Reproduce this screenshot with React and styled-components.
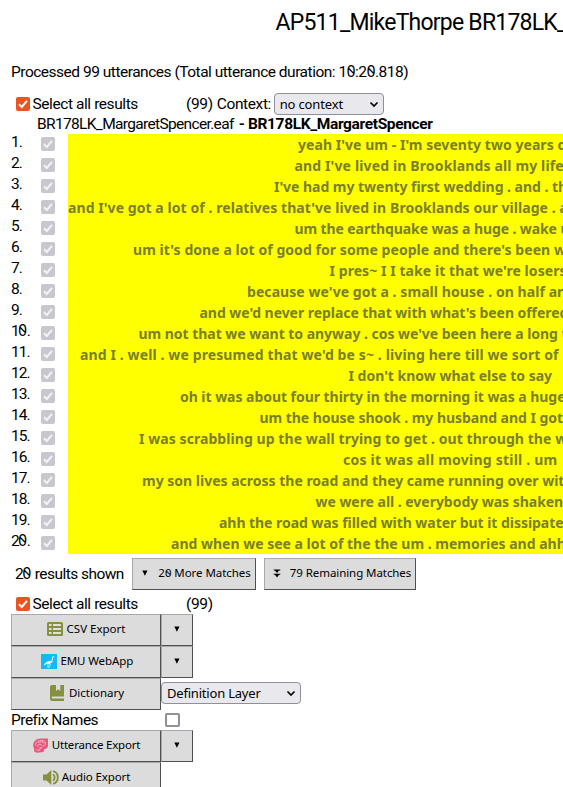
import React from 'react';
import styled, { createGlobalStyle } from 'styled-components';

const Global = createGlobalStyle`
  * { box-sizing: border-box; }
  html, body { margin: 0; background: #fff; overflow: hidden; }
`;

const Page = styled.main`
  width: 563px;
  height: 787px;
  overflow: hidden;
  padding-left: 11px;
  color: #000;
  font: 15.5px/20px Roboto, "Liberation Sans", sans-serif;
  letter-spacing: -0.46px;
  white-space: nowrap;
`;
const Title = styled.h1`
  margin: 8px 0 0 264.5px;
  height: 54px;
  font-size: 23px;
  font-weight: 400;
  line-height: 29px;
  letter-spacing: -0.78px;
`;
const Summary = styled.p`
  margin: 0;
  height: 32px;
  letter-spacing: -0.49px;
`;
const Line = styled.div`
  display: flex;
  align-items: center;
  height: ${(p) => p.$height}px;
`;
const Label = styled.span`
  width: ${(p) => (p.$width ? `${p.$width}px` : 'auto')};
  margin-left: ${(p) => p.$indent || 0}px;
  letter-spacing: ${(p) => p.$track ?? -0.46}px;
`;
const Strong = styled.b`
  letter-spacing: -0.35px;
`;
const ZeroGlyph = styled.span`
  display: inline-block;
  font-family: "Noto Sans", sans-serif;
  font-feature-settings: "zero";
  line-height: 1;
  transform: scaleX(-1);
`;
const Box = styled.span`
  flex: none;
  display: inline-flex;
  width: ${(p) => (p.$tone === 'empty' ? 15 : 14)}px;
  height: 14px;
  border-radius: 2px;
  background: ${(p) => (p.$tone === 'accent' ? '#e95420' : p.$tone === 'muted' ? '#c7c7cf' : '#fff')};
  border: ${(p) => (p.$tone === 'empty' ? '2px solid #8f8f9d' : '0')};
  margin: ${(p) => p.$margin || '0'};
`;
const Select = styled.span`
  display: inline-flex;
  align-items: center;
  justify-content: space-between;
  width: ${(p) => p.$width}px;
  height: 22px;
  margin: 0 0 ${(p) => p.$lift || 0}px ${(p) => p.$gap || 0}px;
  padding: 0 4px 0 5px;
  border: 1px solid #8f8f9d;
  border-radius: 4px;
  background: #e9e9ed;
  font: 13px/20px "Noto Sans", sans-serif;
  letter-spacing: ${(p) => p.$track}px;
`;
const Results = styled.ol`
  list-style: none;
  margin: 0;
  padding: 0;
`;
const Result = styled.li`
  display: grid;
  grid-template-columns: 30px 27px 1fr;
  height: 21px;
`;
const Index = styled.span`
  line-height: 17px;
  letter-spacing: -0.9px;
`;
const Match = styled.span`
  overflow: hidden;
  padding-left: ${(p) => p.$start - 68}px;
  background: #ff0;
  color: #7a802b;
  font: 700 14px/21px "Noto Sans", sans-serif;
  letter-spacing: ${(p) => p.$track}px;
`;
const Button = styled.button`
  display: inline-flex;
  align-items: center;
  justify-content: center;
  gap: ${(p) => p.$gap ?? 4}px;
  width: ${(p) => p.$width}px;
  height: 32px;
  margin: 0 ${(p) => p.$after || 0}px 0 0;
  padding: 0 0 2px ${(p) => p.$push || 0}px;
  border: 1px solid;
  border-color: #a9a9a9 #505050 #505050 #a9a9a9;
  background: #dcdcdc;
  color: #000;
  font: 11.5px/16px "Noto Sans", sans-serif;
  letter-spacing: ${(p) => p.$track || 0}px;
`;
const Icon = styled.svg`
  flex: none;
  display: block;
`;

const Text0 = ({ children }) =>
  children.split(/(0)/).map((part, i) => (part === '0' ? <ZeroGlyph key={i}>0</ZeroGlyph> : part));

const Check = ({ tone, margin }) => (
  <Box $tone={tone} $margin={margin}>
    {tone !== 'empty' && (
      <Icon width="14" height="14" viewBox="0 0 14 14">
        <path d="M3 7.3 5.8 10 11 3.8" fill="none" stroke={tone === 'muted' ? '#f3f3f6' : '#fff'} strokeWidth="2" />
      </Icon>
    )}
  </Box>
);
const Chevron = () => (
  <Icon width="10" height="7" viewBox="0 0 10 7">
    <path d="M1.5 1.5 5 5l3.5-3.5" fill="none" stroke="#000" strokeWidth="1.7" />
  </Icon>
);
const Down = () => (
  <Icon width="6" height="6" viewBox="0 0 6 6">
    <path d="M.3.6h5.2L2.9 5.8z" />
  </Icon>
);
const DoubleDown = () => (
  <Icon width="8" height="9" viewBox="0 0 8 9">
    <path d="M.7.5h6.6v1H6L4 4 2 1.5H.7zM.7 4.8h6.6v1H6L4 8.5 2 5.8H.7z" />
  </Icon>
);
const TableIcon = () => (
  <Icon width="16" height="14" viewBox="0 0 16 14">
    <rect width="16" height="14" rx="1.5" fill="#86913f" />
    <path d="M2 2h2.5v2H2zM6 2h8v2H6zM2 6h2.5v2H2zM6 6h8v2H6zM2 10h2.5v2H2zM6 10h8v2H6z" fill="#e0e0dc" />
  </Icon>
);
const EmuIcon = () => (
  <Icon width="16" height="15" viewBox="0 0 16 15">
    <path d="M0 0h16v15H0z" fill="#12baf8" />
    <path d="M2.8 11.6C3.8 8.3 6.4 6.8 9.6 7c1.2-.3 1.4-1.6 1.5-3.6l1.2-1.3 1.2.6-1.3.7-.5 3.2c-.2 1.6-1.3 2.7-3 3.1L5.6 10z" fill="#f4fcff" />
    <path d="m7.2 9.5-.4 3.8h1.8M8.4 9.3l1 1.5-1.2 2" fill="none" stroke="#fff" strokeWidth=".7" />
  </Icon>
);
const BookIcon = () => (
  <Icon width="14" height="16" viewBox="0 0 14 16">
    <path d="M2 0h4v6l2.2-1.7L10.3 6V0H14v11.4H2.6c-1.2 0-1.2 2 0 2H14V16H2c-1.2 0-2-.8-2-2V2c0-1.2.8-2 2-2z" fill="#86913f" />
  </Icon>
);
const BrainIcon = () => (
  <Icon width="15" height="15" viewBox="0 0 15 15">
    <path d="M15 .5v7c0 2.3-1.2 3.2-3.6 3.6L10.4 14 4 14.8l-2.8-1.3L1 10.5.2 8.2C-.4 3.5 3.4.2 8 .4z" fill="#e9587c" />
    <path d="M2.5 7.4C2.3 4 6 2 9 2.4c4 .4 4.7 4.6 1.7 5.4C8.8 8.2 8 6 6.2 6.3 4.8 6.5 4.2 8 5.4 8.9M5 4.6c2-1.4 5.8-.9 6 .8M3 11c1 1.3 2.6 2 4 .8V9.5l2.2.4" fill="none" stroke="#ffc2ce" strokeWidth=".8" />
  </Icon>
);
const SpeakerIcon = () => (
  <Icon width="16" height="15" viewBox="0 0 16 15">
    <path d="M0 4.5h3.5L8.3 0v15l-4.8-4.5H0z" fill="#86913f" />
    <path d="M10 4.2c2.2 1.3 2.2 5.3 0 6.6M10 1.2c6.4 1.5 6.4 11.1 0 12.6" fill="none" stroke="#86913f" strokeWidth="1.9" />
  </Icon>
);

const results = [
  [298, 0.05, "yeah I've um - I'm seventy two years old"],
  [294.5, 0.14, "and I've lived in Brooklands all my life"],
  [274, -0.03, "I've had my twenty first wedding . and . the"],
  [68, 0.07, "and I've got a lot of . relatives that've lived in Brooklands our village . and"],
  [294.5, -0.1, 'um the earthquake was a huge . wake up'],
  [133, 0.06, "um it's done a lot of good for some people and there's been w"],
  [329.5, 0.07, "I pres~ I I take it that we're losers"],
  [247, 0.07, "because we've got a . small house . on half an"],
  [199.5, -0.05, "and we'd never replace that with what's been offered"],
  [138.5, -0.03, "um not that we want to anyway . cos we've been here a long time"],
  [80, 0.12, "and I . well . we presumed that we'd be s~ . living here till we sort of"],
  [348.5, 0, "I don't know what else to say"],
  [180, -0.04, 'oh it was about four thirty in the morning it was a huge'],
  [259.5, -0.04, 'um the house shook . my husband and I got'],
  [139, 0.07, 'I was scrabbling up the wall trying to get . out through the w'],
  [343, 0.22, 'cos it was all moving still . um'],
  [142, 0, 'my son lives across the road and they came running over with'],
  [315.5, -0.03, 'we were all . everybody was shaken'],
  [219, -0.05, 'ahh the road was filled with water but it dissipated'],
  [171, 0, 'and when we see a lot of the the um . memories and ahh'],
];

const SelectAll = ({ height, children }) => (
  <Line $height={height}>
    <Check tone="accent" margin="0 3px 0 4.5px" />
    <Label $width={153.5} $track={-0.42}>Select all results</Label>
    <Label $track={-0.35}>(99)</Label>
    {children}
  </Line>
);

export default function App() {
  return (
    <Page>
      <Global />
      <Title>AP511_MikeThorpe BR178LK_MargaretSpencer</Title>
      <Summary><Text0>Processed 99 utterances (Total utterance duration: 10:20.818)</Text0></Summary>
      <SelectAll height={20}>
        <Label $indent={4} $track={-0.38}>Context:</Label>
        <Select $width={110} $gap={2.7} $track={-0.15}>no context<Chevron /></Select>
      </SelectAll>
      <Line $height={20}>
        <Label $indent={26} $track={-0.66}>BR178LK_MargaretSpencer.eaf</Label>
        <Label $indent={5}><Strong>- BR178LK_MargaretSpencer</Strong></Label>
      </Line>
      <Results>
        {results.map(([start, track, text], i) => (
          <Result key={text}>
            <Index><Text0>{`${i + 1}.`}</Text0></Index>
            <Check tone="muted" margin="3px 0 0" />
            <Match $start={start} $track={track}>{text}</Match>
          </Result>
        ))}
      </Results>
      <Line $height={40}>
        <Label $width={117} $indent={4} $track={-0.55}><Text0>20 results shown</Text0></Label>
        <Button $width={124} $gap={10} $after={8} $push={5} $track={-0.05}><Down /><span><Text0>20 More Matches</Text0></span></Button>
        <Button $width={152} $gap={9} $push={4} $track={-0.07}><DoubleDown />79 Remaining Matches</Button>
      </Line>
      <SelectAll height={20} />
      <Line $height={32}>
        <Button $width={150}><TableIcon />CSV Export</Button>
        <Button $width={32}><Down /></Button>
      </Line>
      <Line $height={32}>
        <Button $width={150} $gap={3.5} $push={2} $track={-0.1}><EmuIcon />EMU WebApp</Button>
        <Button $width={32}><Down /></Button>
      </Line>
      <Line $height={32}>
        <Button $width={150} $gap={5} $push={2}><BookIcon />Dictionary</Button>
        <Select $width={140} $lift={2} $track={-0.2}>Definition Layer<Chevron /></Select>
      </Line>
      <Line $height={20}>
        <Label $width={154} $track={-0.5}>Prefix Names</Label>
        <Check tone="empty" />
      </Line>
      <Line $height={32}>
        <Button $width={150} $push={1} $track={-0.2}><BrainIcon />Utterance Export</Button>
        <Button $width={32}><Down /></Button>
      </Line>
      <Line $height={32}>
        <Button $width={150} $gap={3} $push={1} $track={-0.1}><SpeakerIcon />Audio Export</Button>
      </Line>
    </Page>
  );
}
